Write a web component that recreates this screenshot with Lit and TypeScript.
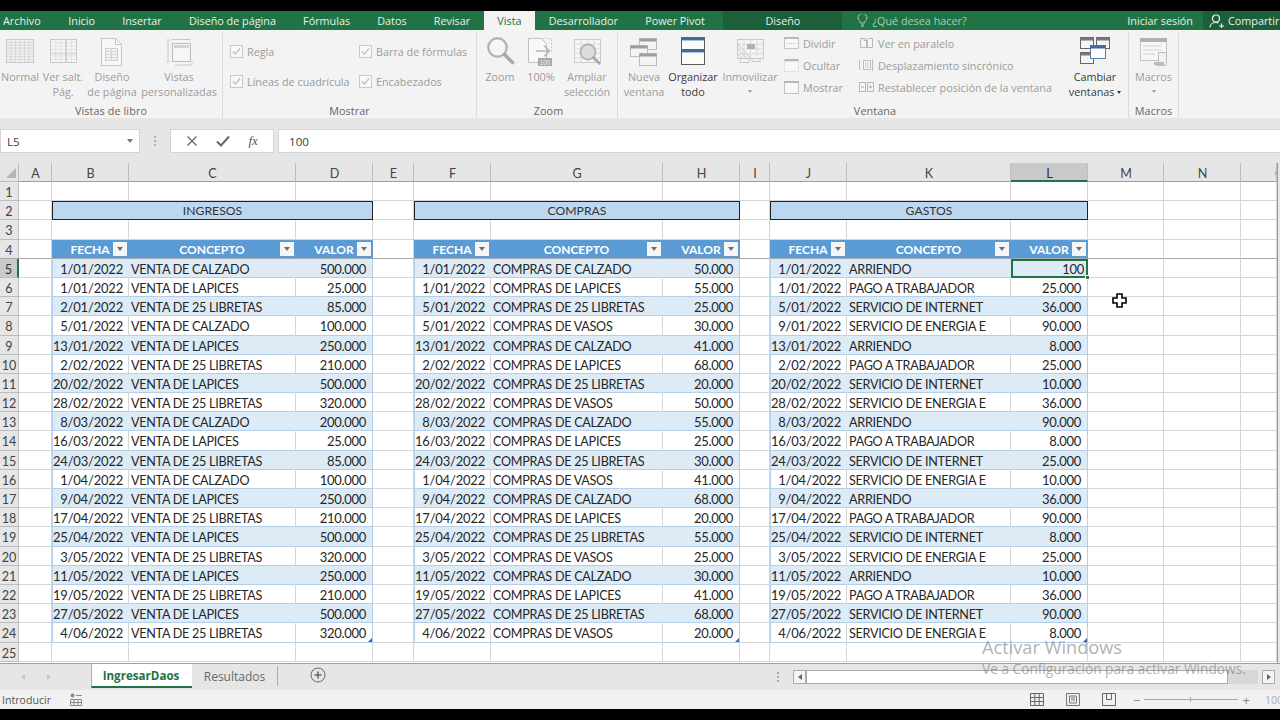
import {LitElement, css, html, svg} from 'lit';
import {customElement} from 'lit/decorators.js';

// draws a table of thin lines, used by most of the ribbon icons
function lines(x: number, y: number, w: number, h: number, cols: number, rows: number, color = '#d2d2d2') {
  const out = [];
  for (let i = 1; i < cols; i++) {
    const px = x + (w * i) / cols;
    out.push(svg`<line x1=${px} y1=${y} x2=${px} y2=${y + h} stroke=${color} stroke-width="0.8"></line>`);
  }
  for (let i = 1; i < rows; i++) {
    const py = y + (h * i) / rows;
    out.push(svg`<line x1=${x} y1=${py} x2=${x + w} y2=${py} stroke=${color} stroke-width="0.8"></line>`);
  }
  return out;
}

const big = (body: unknown) =>
  html`<svg class="icon" width="32" height="32" viewBox="0 0 32 32" fill="none">${body}</svg>`;

const icons: Record<string, unknown> = {
  normal: big(svg`<rect x="2.5" y="4.5" width="27" height="23" fill="#f4f0f0" stroke="#c8c8c8"></rect>${lines(2.5, 4.5, 27, 23, 6, 8)}`),
  pagebreak: big(svg`<rect x="3.5" y="4.5" width="26" height="23" fill="#f6f6f6" stroke="#c8c8c8"></rect>${lines(3.5, 4.5, 26, 23, 5, 7, '#dcdcdc')}
    <line x1="19" y1="4.5" x2="19" y2="27.5" stroke="#bdbdbd"></line><line x1="3.5" y1="19" x2="29.5" y2="19" stroke="#c4c4c4" stroke-dasharray="2 1"></line>`),
  pagelayout: big(svg`<path d="M5.5 3.5h14l6 6v21h-20z" fill="#f8f8f8" stroke="#c6c6c6"></path><path d="M19.5 3.5v6h6" stroke="#c6c6c6"></path>
    <rect x="9.5" y="13.5" width="12" height="12" fill="#f1f1f1" stroke="#cfcfcf"></rect>${lines(9.5, 13.5, 12, 12, 2, 4, '#cfcfcf')}`),
  custom: big(svg`<rect x="9.5" y="8.5" width="18" height="18" fill="#f6f6f6" stroke="#bcbcbc"></rect><rect x="11" y="10" width="15" height="3" fill="#d8d0d0"></rect>
    <path d="M5 5v22M3.5 5h3M3.5 27h3M9 4.5h18M9 3.5v2M27 3.5v2M12 30h17v-3" stroke="#c8c8c8"></path>`),
  zoom: big(svg`<circle cx="13.5" cy="12.5" r="9.2" fill="#f6f6f6" stroke="#b4b4b4" stroke-width="2.4"></circle><path d="M20.5 19.5l8 8" stroke="#aaa" stroke-width="3.6" stroke-linecap="round"></path>`),
  hundred: big(svg`<path d="M3.5 3.5h13l5 5v19h-18z" fill="#f8f8f8" stroke="#c0c0c0"></path><path d="M16.5 3.5h10v15" stroke="#c8c8c8" stroke-dasharray="2 1.5"></path>
    <path d="M11 16h13M19 10.5l5.5 5.5-5.5 5.5" stroke="#b4b4b4" stroke-width="1.4"></path>
    <rect x="13" y="23" width="14" height="8" fill="#a8a8a8"></rect><text x="20" y="29.6" text-anchor="middle" font-size="6.4" font-family="Liberation Sans" fill="#f2f2f2">100</text>`),
  selection: big(svg`<rect x="3.5" y="4.5" width="26" height="23" fill="#f6f6f6" stroke="#cbcbcb"></rect>${lines(3.5, 4.5, 26, 23, 4, 5, '#d6d6d6')}
    <circle cx="17" cy="17" r="7.5" fill="#e0dcdc" stroke="#b4b4b4" stroke-width="1.8"></circle><path d="M22.5 22.5l6 6" stroke="#aaa" stroke-width="2.6" stroke-linecap="round"></path>`),
  newwin: big(svg`<rect x="11.5" y="3.5" width="17" height="11" fill="#f4f4f4" stroke="#bdbdbd"></rect><rect x="11.5" y="3.5" width="17" height="3" fill="#9d9d9d"></rect>
    <rect x="2.5" y="10.5" width="17" height="11" fill="#f4f4f4" stroke="#bdbdbd"></rect><rect x="2.5" y="10.5" width="17" height="3" fill="#9d9d9d"></rect>
    <rect x="11.5" y="18.5" width="17" height="12" fill="#f4f4f4" stroke="#bdbdbd"></rect><rect x="11.5" y="18.5" width="17" height="3" fill="#9d9d9d"></rect>`),
  arrange: big(svg`<rect x="4.5" y="2.5" width="23" height="27" fill="#fbfbfb" stroke="#5a5a5a"></rect><rect x="4" y="2" width="24" height="3.4" fill="#3f6a9f"></rect><rect x="4" y="14" width="24" height="3.4" fill="#3f6a9f"></rect>`),
  freeze: big(svg`<rect x="3.5" y="4.5" width="26" height="19" fill="#f4f4f4" stroke="#c8c8c8"></rect>${lines(3.5, 4.5, 26, 19, 4, 4, '#d4d4d4')}
    <rect x="13" y="9" width="8" height="5" fill="#b0b0b0"></rect><path d="M3.5 14l9 9M3.5 9l13 14M3.5 19l5 4M6 23.5v4h9v-4M18 23.5v3h8v-3" stroke="#c8c8c8"></path>`),
  switchwin: big(svg`<rect x="1.5" y="2.5" width="13" height="11" fill="#f5f5f5" stroke="#666"></rect><rect x="1.5" y="2.5" width="13" height="3" fill="#777"></rect>
    <rect x="17.5" y="2.5" width="13" height="11" fill="#f5f5f5" stroke="#666"></rect><rect x="17.5" y="2.5" width="13" height="3" fill="#777"></rect>
    <rect x="1.5" y="17.5" width="13" height="11" fill="#f5f5f5" stroke="#666"></rect><rect x="1.5" y="17.5" width="13" height="3" fill="#777"></rect>
    <rect x="11.5" y="10.5" width="15" height="13" fill="#fbfbfb" stroke="#5d7ea6"></rect><rect x="11.5" y="10.5" width="15" height="3" fill="#3f6a9f"></rect>`),
  macros: big(svg`<rect x="2.5" y="3.5" width="26" height="22" fill="#f6f6f6" stroke="#c6c6c6"></rect><rect x="2" y="3" width="27" height="4" fill="#b0b0b0"></rect>
    <path d="M5 11h18M5 15h18M5 19h12" stroke="#d2d2d2"></path><path d="M20.5 17.5h8v11a2 2 0 0 1-2 2h-8a2 2 0 0 0 2-2z" fill="#f2f2f2" stroke="#bcbcbc"></path><rect x="16" y="27" width="10" height="3" fill="#bcbcbc"></rect>`),
};

const small = (body: unknown) =>
  html`<svg class="mini" width="15" height="14" viewBox="0 0 15 14" fill="none">${body}</svg>`;

const miniIcons: Record<string, unknown> = {
  split: small(svg`<rect x="0.5" y="1.5" width="14" height="11" fill="#f8f8f8" stroke="#c4c4c4"></rect><rect x="0.5" y="1" width="14" height="2" fill="#b8b8b8"></rect><line x1="3" y1="7.5" x2="12" y2="7.5" stroke="#b8b8b8" stroke-dasharray="1 1"></line>`),
  hide: small(svg`<rect x="0.5" y="1" width="14" height="2" fill="#b4b4b4"></rect><rect x="0.5" y="3.5" width="14" height="10" fill="#f8f8f8" stroke="#d0d0d0" stroke-dasharray="1 1"></rect>`),
  show: small(svg`<rect x="0.5" y="1.5" width="14" height="12" fill="#f8f8f8" stroke="#c4c4c4"></rect><rect x="0.5" y="1" width="14" height="2" fill="#b4b4b4"></rect>`),
  side: small(svg`<path d="M1.5 2.5h5l1 1v8h-6zM8.5 3.5l1-1h4v9h-5z" fill="#f6f6f6" stroke="#b8b8b8"></path><path d="M5 2.5v2h2" stroke="#b8b8b8"></path>`),
  sync: small(svg`<path d="M1.5 2.5h-1v9h1M4.5 2.5h7v9h-7zM13.5 1v12" stroke="#bcbcbc"></path><path d="M6 5h4M6 7h4M6 9h4" stroke="#d0d0d0"></path>`),
  reset: small(svg`<rect x="0.5" y="2.5" width="6" height="9" fill="#f6f6f6" stroke="#b8b8b8"></rect><rect x="8.5" y="2.5" width="6" height="9" fill="#f6f6f6" stroke="#b8b8b8"></rect><path d="M2 7h3M10 7h3M11.5 5.5v3" stroke="#a8a8a8"></path>`),
};

@customElement('excel-ribbon')
export class ExcelRibbon extends LitElement {
  static styles = css`
    :host {
      display: flex;
      height: 88px;
      background: #f3f3f3;
      font-family: "Open Sans", "Liberation Sans", sans-serif;
      font-size: 10.8px;
      color: #9b9b9b;
      flex: none;
    }
    .group {
      display: flex;
      flex-direction: column;
      box-sizing: border-box;
      border-right: 1px solid #dadada;
      margin-top: 3px;
      height: 85px;
    }
    .body {
      flex: 1;
      display: flex;
      margin-top: 2px;
    }
    .label {
      height: 15px;
      line-height: 15px;
      text-align: center;
      color: #666;
      letter-spacing: 0.1px;
    }
    .btn {
      display: flex;
      flex-direction: column;
      align-items: center;
      flex: none;
      line-height: 15px;
      text-align: center;
      white-space: pre;
    }
    .btn.on { color: #3a3a3a; }
    .icon { display: block; margin-bottom: 2px; }
    .caret {
      display: inline-block;
      width: 0;
      height: 0;
      border: 2.5px solid transparent;
      border-top: 3px solid currentColor;
      border-bottom: 0;
      vertical-align: 2px;
    }
    .checks {
      display: grid;
      grid-template-columns: 129px 1fr;
      grid-auto-rows: 30px;
      padding: 6px 0 0 7px;
      width: 100%;
    }
    .check {
      display: flex;
      align-items: center;
      gap: 4px;
      height: 20px;
    }
    .box {
      width: 11px;
      height: 11px;
      border: 1px solid #c9c9c9;
      background: #f8f8f8;
      display: flex;
    }
    .list {
      display: flex;
      flex-direction: column;
      flex: none;
      padding-left: 4px;
      margin-top: -3px;
      box-sizing: border-box;
    }
    .row {
      display: flex;
      align-items: center;
      gap: 4px;
      height: 22px;
      white-space: nowrap;
    }
  `;

  private button(icon: string, text: string, width: number, on = false) {
    return html`<div class="btn ${on ? 'on' : ''}" style="width:${width}px">${icons[icon]}<span>${text}</span></div>`;
  }

  private check(text: string) {
    return html`<div class="check"><span class="box"><svg width="11" height="11" viewBox="0 0 11 11" fill="none"><path d="M2 5.5l2.4 2.6L9 2.5" stroke="#bdbdbd" stroke-width="1.2"></path></svg></span>${text}</div>`;
  }

  private item(icon: string, text: string) {
    return html`<div class="row">${miniIcons[icon]}<span>${text}</span></div>`;
  }

  render() {
    return html`
      <div class="group" style="width:223px">
        <div class="body">
          ${this.button('normal', 'Normal', 40)}
          ${this.button('pagebreak', 'Ver salt.\nPág.', 46)}
          ${this.button('pagelayout', 'Diseño\nde página', 52)}
          ${this.button('custom', 'Vistas\npersonalizadas', 82)}
        </div>
        <div class="label">Vistas de libro</div>
      </div>
      <div class="group" style="width:254px">
        <div class="body">
          <div class="checks">
            ${this.check('Regla')}${this.check('Barra de fórmulas')}
            ${this.check('Líneas de cuadrícula')}${this.check('Encabezados')}
          </div>
        </div>
        <div class="label">Mostrar</div>
      </div>
      <div class="group" style="width:141px;padding-left:3px">
        <div class="body">
          ${this.button('zoom', 'Zoom', 40)}
          ${this.button('hundred', '100%', 42)}
          ${this.button('selection', 'Ampliar\nselección', 50)}
        </div>
        <div class="label">Zoom</div>
      </div>
      <div class="group" style="width:511px;padding-left:4px">
        <div class="body">
          ${this.button('newwin', 'Nueva\nventana', 44)}
          ${this.button('arrange', 'Organizar\ntodo', 54, true)}
          <div class="btn" style="width:60px">${icons.freeze}<span>Inmovilizar</span><span class="caret" style="margin-top:6px"></span></div>
          <div class="list" style="width:75px">
            ${this.item('split', 'Dividir')}${this.item('hide', 'Ocultar')}${this.item('show', 'Mostrar')}
          </div>
          <div class="list" style="width:207px">
            ${this.item('side', 'Ver en paralelo')}${this.item('sync', 'Desplazamiento sincrónico')}${this.item('reset', 'Restablecer posición de la ventana')}
          </div>
          <div class="btn on" style="width:66px">${icons.switchwin}<span>Cambiar</span><span>ventanas <span class="caret"></span></span></div>
        </div>
        <div class="label">Ventana</div>
      </div>
      <div class="group" style="width:50px">
        <div class="body">
          <div class="btn" style="width:49px">${icons.macros}<span>Macros</span><span class="caret" style="margin-top:6px"></span></div>
        </div>
        <div class="label">Macros</div>
      </div>
    `;
  }
}

type Row = [string, string, string];

const dates = ['1/01/2022', '1/01/2022', '5/01/2022', '5/01/2022', '13/01/2022', '2/02/2022', '20/02/2022', '28/02/2022', '8/03/2022', '16/03/2022', '24/03/2022', '1/04/2022', '9/04/2022', '17/04/2022', '25/04/2022', '3/05/2022', '11/05/2022', '19/05/2022', '27/05/2022', '4/06/2022'];

const zip = (d: string[], names: string[], vals: string[]): Row[] => d.map((x, i) => [x, names[i], vals[i]]);

const ingresos = zip(
  dates.map((d, i) => (i === 2 ? '2/01/2022' : d)),
  ['VENTA DE CALZADO', 'VENTA DE LAPICES', 'VENTA DE 25 LIBRETAS', 'VENTA DE CALZADO', 'VENTA DE LAPICES', 'VENTA DE 25 LIBRETAS', 'VENTA DE LAPICES', 'VENTA DE 25 LIBRETAS', 'VENTA DE CALZADO', 'VENTA DE LAPICES', 'VENTA DE 25 LIBRETAS', 'VENTA DE CALZADO', 'VENTA DE LAPICES', 'VENTA DE 25 LIBRETAS', 'VENTA DE LAPICES', 'VENTA DE 25 LIBRETAS', 'VENTA DE LAPICES', 'VENTA DE 25 LIBRETAS', 'VENTA DE LAPICES', 'VENTA DE 25 LIBRETAS'],
  ['500.000', '25.000', '85.000', '100.000', '250.000', '210.000', '500.000', '320.000', '200.000', '25.000', '85.000', '100.000', '250.000', '210.000', '500.000', '320.000', '250.000', '210.000', '500.000', '320.000'],
);

const compras = zip(
  dates,
  ['CALZADO', 'LAPICES', '25 LIBRETAS', 'VASOS', 'CALZADO', 'LAPICES', '25 LIBRETAS', 'VASOS', 'CALZADO', 'LAPICES', '25 LIBRETAS', 'VASOS', 'CALZADO', 'LAPICES', '25 LIBRETAS', 'VASOS', 'CALZADO', 'LAPICES', '25 LIBRETAS', 'VASOS'].map((n) => `COMPRAS DE ${n}`),
  ['50.000', '55.000', '25.000', '30.000', '41.000', '68.000', '20.000', '50.000', '55.000', '25.000', '30.000', '41.000', '68.000', '20.000', '55.000', '25.000', '30.000', '41.000', '68.000', '20.000'],
);

const gastoNames = ['ARRIENDO', 'PAGO A TRABAJADOR', 'SERVICIO DE INTERNET', 'SERVICIO DE ENERGIA E'];
const gastos = zip(
  dates.map((d, i) => (i === 3 ? '9/01/2022' : d)),
  dates.map((_, i) => gastoNames[i % 4]),
  ['100', '25.000', '36.000', '90.000', '8.000', '25.000', '10.000', '36.000', '90.000', '8.000', '25.000', '10.000', '36.000', '90.000', '8.000', '25.000', '10.000', '36.000', '90.000', '8.000'],
);

const tables = [
  {col: 2, title: 'INGRESOS', rows: ingresos},
  {col: 6, title: 'COMPRAS', rows: compras},
  {col: 10, title: 'GASTOS', rows: gastos},
];

const COLS = 'ABCDEFGHIJKLMNO'.split('');

@customElement('excel-grid')
export class ExcelGrid extends LitElement {
  static styles = css`
    :host {
      display: block;
      flex: none;
      height: 500px;
      background: #e6e6e6;
      font-family: Lato, "Liberation Sans", sans-serif;
      font-size: 13px;
      color: #262626;
      position: relative;
      overflow: hidden;
    }
    .sheet {
      display: grid;
      width: 1277px;
      grid-template-columns: 19px 33px 77px 167px 77px 41px 77px 172px 77px 30px 77px 164px 77px 76px 77px 36px;
      grid-template-rows: 19px repeat(25, 19.2px);
      height: 500px;
      background: #fff;
      border-right: 1px solid #9a9a9a;
      overflow: hidden;
    }
    .c {
      box-sizing: border-box;
      border-right: 1px solid #d6d6d6;
      border-bottom: 1px solid #d6d6d6;
      line-height: 20px;
      white-space: nowrap;
      overflow: hidden;
      position: relative;
      min-width: 0;
    }
    .head {
      background: #e6e6e6;
      text-align: center;
      color: #444;
      border-color: #bdbdbd;
      font-size: 12.6px;
      line-height: 21px;
    }
    .head.corner { display: flex; align-items: flex-end; justify-content: flex-end; padding: 0 2px 3px 0; }
    .head.col { border-bottom: 1px solid #9f9f9f; padding-left: 1px; }
    .head.active { background: #c9c9c9; color: #2f2f2f; }
    .head.col.active { border-bottom: 2px solid #217346; }
    .head.row.active { border-right: 2px solid #217346; }
    .head.clip { text-align: left; padding-left: 34px; }
    .freeze { border-bottom-color: #a8a8a8; }
    .title {
      background: #bdd7ee;
      border: 1px solid #222;
      text-align: center;
      font-size: 12.2px;
      color: #333;
      line-height: 18px;
    }
    .th {
      background: #5b9bd5;
      border-color: #5b9bd5;
      border-bottom-color: #a8a8a8;
      color: #fff;
      font-weight: 700;
      font-size: 12px;
      text-align: center;
      overflow: visible;
    }
    .flt {
      position: absolute;
      right: 1px;
      top: 2px;
      width: 14px;
      height: 14px;
      background: #f5f5f5;
      display: flex;
      align-items: center;
      justify-content: center;
    }
    .flt::after {
      content: '';
      border: 3.5px solid transparent;
      border-top: 4px solid #6f6f6f;
      border-bottom: 0;
    }
    .odd { background: #ddebf7; border-right-color: #ddebf7; }
    .td { border-bottom-color: #b4cfea; line-height: 21px; }
    .even { background: #fff; }
    .first { border-left: 1px solid #b4cfea; }
    .last { border-right: 1px solid #b4cfea; }
    .date { text-align: right; padding-right: 5px; letter-spacing: -0.2px; }
    .name { padding-left: 2px; font-size: 12.6px; letter-spacing: -0.27px; }
    .val { text-align: right; padding-right: 6px; letter-spacing: -0.3px; }
    .end::after {
      content: '';
      position: absolute;
      right: 0;
      bottom: 0;
      border-left: 4px solid transparent;
      border-bottom: 4px solid #3f5fa8;
    }
    .sel {
      outline: 2px solid #217346;
      outline-offset: -2px;
      padding-right: 3px;
      overflow: visible;
      z-index: 2;
    }
    .sel::after {
      content: '';
      position: absolute;
      right: -3px;
      bottom: -3px;
      width: 5px;
      height: 5px;
      background: #217346;
      border: 1px solid #fff;
      box-sizing: border-box;
    }
    .tri {
      width: 0;
      height: 0;
      border-left: 10px solid transparent;
      border-bottom: 10px solid #b4b4b4;
    }
    .pointer {
      position: absolute;
      left: 1112px;
      top: 130px;
    }
  `;

  // content of one cell of the sheet, r and c start at 1 like in excel
  private cell(r: number, c: number) {
    for (const t of tables) {
      if (c < t.col || c > t.col + 2) continue;
      const i = c - t.col;
      if (r === 4) {
        const label = ['FECHA', 'CONCEPTO', 'VALOR'][i];
        return html`<div class="c th"><span>${label}</span><span class="flt"></span></div>`;
      }
      if (r >= 5 && r <= 24) {
        const row = t.rows[r - 5];
        const selected = r === 5 && c === 12;
        const cls = [
          'c', 'td',
          r % 2 ? 'odd' : 'even',
          ['date', 'name', 'val'][i],
          i === 0 ? 'first' : '',
          i === 2 ? 'last' : '',
          i === 2 && r === 24 ? 'end' : '',
          selected ? 'sel' : '',
        ].join(' ');
        return html`<div class=${cls}>${row[i]}</div>`;
      }
    }
    return html`<div class="c ${r === 4 ? 'freeze' : ''}"></div>`;
  }

  render() {
    const rows = [];
    for (let r = 1; r <= 25; r++) {
      rows.push(html`<div class="c head row ${r === 5 ? 'active' : ''} ${r === 4 ? 'freeze' : ''}">${r}</div>`);
      for (let c = 1; c <= 15; c++) {
        const t = tables.find((x) => x.col === c);
        if (r === 2 && t) {
          rows.push(html`<div class="c title" style="grid-column:span 3">${t.title}</div>`);
          c += 2;
          continue;
        }
        rows.push(this.cell(r, c));
      }
    }
    return html`
      <div class="sheet">
        <div class="c head corner"><span class="tri"></span></div>
        ${COLS.map((l) => html`<div class="c head col ${l === 'L' ? 'active' : ''} ${l === 'O' ? 'clip' : ''}">${l}</div>`)}
        ${rows}
      </div>
      <svg class="pointer" width="15" height="15" viewBox="0 0 15 15">
        <path d="M5 1h5v4h4v5h-4v4H5v-4H1V5h4z" fill="#fff" stroke="#000" stroke-width="1.6"></path>
      </svg>
    `;
  }
}

@customElement('app-root')
export class AppRoot extends LitElement {
  static styles = css`
    :host {
      display: flex;
      flex-direction: column;
      width: 1280px;
      height: 720px;
      background: #000;
      overflow: hidden;
      position: relative;
      font-family: "Open Sans", "Liberation Sans", sans-serif;
    }
    .black-top { height: 11px; flex: none; }
    .tabs {
      display: flex;
      align-items: stretch;
      height: 19px;
      flex: none;
      background: #217346;
      color: #e8f1ec;
      font-size: 10.8px;
      line-height: 19px;
      white-space: nowrap;
    }
    .tab { padding: 0 13.6px; }
    .tab.file { padding: 0 14px 0 3px; }
    .tab.on { background: #f3f3f3; color: #217346; }
    .tab.context {
      background: #1c5f3a;
      width: 119px;
      box-sizing: border-box;
      text-align: center;
      padding: 0;
      margin-left: 5px;
    }
    .tell {
      display: flex;
      align-items: center;
      gap: 4px;
      margin-left: 15px;
      color: #a9cbb8;
      flex: 1;
    }
    .login { margin-right: 10px; }
    .share {
      display: flex;
      align-items: center;
      gap: 3px;
      background: #1c5f3a;
      width: 77px;
      padding-left: 6px;
      box-sizing: border-box;
      overflow: hidden;
    }
    .band { height: 11px; flex: none; background: #e6e6e6; }
    .formula {
      display: flex;
      align-items: stretch;
      height: 34px;
      padding-bottom: 10px;
      box-sizing: border-box;
      background: #e6e6e6;
      flex: none;
      font-size: 11.6px;
      color: #404040;
    }
    .namebox {
      width: 140px;
      background: #fff;
      border: 1px solid #d4d4d4;
      box-sizing: border-box;
      display: flex;
      align-items: center;
      justify-content: space-between;
      padding: 0 6px;
    }
    .down {
      border: 3.5px solid transparent;
      border-top: 4px solid #777;
      border-bottom: 0;
    }
    .dots {
      width: 30px;
      display: flex;
      flex-direction: column;
      align-items: center;
      justify-content: center;
      gap: 2px;
    }
    .dots i { width: 2px; height: 2px; background: #b0b0b0; display: block; }
    .fxbox {
      width: 104px;
      background: #fff;
      border: 1px solid #d4d4d4;
      box-sizing: border-box;
      display: flex;
      align-items: center;
      justify-content: space-around;
      padding: 0 6px;
      margin-right: 4px;
    }
    .fx {
      font-family: "Liberation Serif", serif;
      font-style: italic;
      font-size: 13px;
      color: #555;
    }
    .input {
      flex: 1;
      background: #fff;
      border: 1px solid #d4d4d4;
      border-right: 0;
      display: flex;
      align-items: center;
      padding-left: 10px;
    }
    .sheets {
      display: flex;
      align-items: stretch;
      height: 27px;
      flex: none;
      background: #e6e6e6;
      border-top: 1px solid #a0a0a0;
      box-sizing: border-box;
      font-size: 12px;
      color: #666;
    }
    .nav {
      width: 91px;
      display: flex;
      align-items: center;
      gap: 22px;
      padding-left: 21px;
      box-sizing: border-box;
    }
    .nav i { border: 3px solid transparent; }
    .nav i.l { border-right: 4px solid #c6c6c6; border-left: 0; }
    .nav i.r { border-left: 4px solid #c6c6c6; border-right: 0; }
    .sheet-tab {
      display: flex;
      align-items: center;
      justify-content: center;
      box-sizing: border-box;
      height: 24px;
    }
    .sheet-tab.on {
      width: 101px;
      background: #fff;
      color: #217346;
      font-weight: 700;
      font-size: 11.6px;
      border-left: 1px solid #ababab;
      border-bottom: 2px solid #217346;
      padding-right: 2px;
    }
    .sheet-tab.off {
      width: 86px;
      border-right: 1px solid #ababab;
      margin: 2px 0 3px;
      height: 20px;
    }
    .add { margin: 3px 0 0 32px; }
    .dots3 {
      margin: 0 8px 0 444px;
      width: 15px;
      display: flex;
      flex-direction: column;
      align-items: center;
      justify-content: center;
      gap: 2px;
    }
    .dots3 i { width: 2px; height: 2px; background: #aaa; display: block; }
    .scroll {
      display: flex;
      align-items: center;
      height: 14px;
      margin-top: 6px;
    }
    .arrow {
      width: 13px;
      height: 14px;
      box-sizing: border-box;
      background: #f4f4f4;
      border: 1px solid #ababab;
      display: flex;
      align-items: center;
      justify-content: center;
    }
    .arrow i { border: 3px solid transparent; }
    .arrow i.l { border-right: 4px solid #666; border-left: 0; }
    .arrow i.r { border-left: 4px solid #666; border-right: 0; }
    .track {
      width: 452px;
      height: 14px;
      background: #d8d8d8;
      margin-right: 4px;
    }
    .thumb {
      width: 422px;
      height: 14px;
      background: #fff;
      border: 1px solid #ababab;
      box-sizing: border-box;
    }
    .status {
      display: flex;
      align-items: center;
      height: 19px;
      flex: none;
      background: #f1f1f1;
      font-size: 10.6px;
      color: #555;
      padding-left: 2px;
      overflow: hidden;
    }
    .status .rec { margin-left: 18px; }
    .views {
      display: flex;
      align-items: center;
      margin-left: auto;
      gap: 22px;
      margin-right: 14px;
    }
    .slider {
      display: flex;
      align-items: center;
      color: #888;
      gap: 4px;
      font-size: 13px;
      width: 118px;
      margin-left: -5px;
    }
    .slider .rail {
      width: 94px;
      height: 1px;
      background: #a8a8a8;
      position: relative;
    }
    .slider .rail::after {
      content: '';
      position: absolute;
      left: 46px;
      top: -2px;
      width: 1px;
      height: 5px;
      background: #a8a8a8;
    }
    .pct {
      width: 15px;
      overflow: hidden;
      color: #aaa;
      white-space: nowrap;
    }
    .bottom { flex: 1; }
    .watermark {
      position: absolute;
      left: 982px;
      top: 636px;
      color: rgba(110, 110, 110, 0.55);
      pointer-events: none;
      white-space: nowrap;
    }
    .watermark .a { font-size: 18.2px; line-height: 22px; }
    .watermark .b { font-size: 13.7px; line-height: 22px; }
  `;

  render() {
    const tabs = ['Inicio', 'Insertar', 'Diseño de página', 'Fórmulas', 'Datos', 'Revisar'];
    return html`
      <div class="black-top"></div>
      <div class="tabs">
        <div class="tab file">Archivo</div>
        ${tabs.map((t) => html`<div class="tab">${t}</div>`)}
        <div class="tab on">Vista</div>
        <div class="tab">Desarrollador</div>
        <div class="tab">Power Pivot</div>
        <div class="tab context">Diseño</div>
        <div class="tell">
          <svg width="11" height="13" viewBox="0 0 11 13" fill="none" stroke="#a9cbb8">
            <path d="M3.5 9c0-2-2.5-3-2.5-5a4.5 4.5 0 0 1 9 0c0 2-2.5 3-2.5 5zM4 11h3M4.5 12.5h2"></path>
          </svg>
          <span>¿Qué desea hacer?</span>
        </div>
        <div class="login">Iniciar sesión</div>
        <div class="share">
          <svg width="16" height="14" viewBox="0 0 16 14" fill="none" stroke="#e8f1ec" stroke-width="1.2">
            <circle cx="7" cy="4.5" r="3.5"></circle>
            <path d="M1 13.5c0-3 2.5-5 6-5 1 0 2 .2 2.5.5M10 12h5M12.5 9.5v5"></path>
          </svg>
          <span>Compartir</span>
        </div>
      </div>
      <excel-ribbon></excel-ribbon>
      <div class="band"></div>
      <div class="formula">
        <div class="namebox"><span>L5</span><span class="down"></span></div>
        <div class="dots"><i></i><i></i><i></i></div>
        <div class="fxbox">
          <svg width="12" height="12" viewBox="0 0 12 12" fill="none" stroke="#666" stroke-width="1.3"><path d="M1.5 1.5l9 9M10.5 1.5l-9 9"></path></svg>
          <svg width="14" height="12" viewBox="0 0 14 12" fill="none" stroke="#666" stroke-width="2"><path d="M1 6.5l4 4 8-9"></path></svg>
          <span class="fx">fx</span>
        </div>
        <div class="input">100</div>
      </div>
      <excel-grid></excel-grid>
      <div class="sheets">
        <div class="nav"><i class="l"></i><i class="r"></i></div>
        <div class="sheet-tab on">IngresarDaos</div>
        <div class="sheet-tab off">Resultados</div>
        <svg class="add" width="16" height="16" viewBox="0 0 16 16" fill="none" stroke="#666">
          <circle cx="8" cy="8" r="7"></circle><path d="M4.5 8h7M8 4.5v7" stroke-width="1.5"></path>
        </svg>
        <div class="dots3"><i></i><i></i><i></i></div>
        <div class="scroll">
          <div class="arrow"><i class="l"></i></div>
          <div class="track"><div class="thumb"></div></div>
          <div class="arrow"><i class="r"></i></div>
        </div>
      </div>
      <div class="status">
        <span>Introducir</span>
        <svg class="rec" width="14" height="14" viewBox="0 0 14 14" fill="none" stroke="#8a8a8a">
          <circle cx="3.5" cy="2.5" r="2" fill="#8a8a8a" stroke="none"></circle>
          <path d="M7 2.5h6M1.5 6.5h11v6h-11zM1.5 9.5h11M5 6.5v6M9 6.5v6"></path>
        </svg>
        <div class="views">
          <svg width="14" height="13" viewBox="0 0 14 13" fill="none" stroke="#666"><path d="M.5.5h13v12H.5zM.5 4.5h13M.5 8.5h13M4.8.5v12M9.2.5v12"></path></svg>
          <svg width="14" height="13" viewBox="0 0 14 13" fill="none" stroke="#777"><path d="M.5.5h13v12H.5zM3.5 3h7v7h-7zM5 5h4M5 7h4"></path></svg>
          <svg width="14" height="13" viewBox="0 0 14 13" fill="none" stroke="#666"><path d="M.5.5h13v12H.5zM4.5.5v6h5v-6"></path></svg>
          <div class="slider">
            <span>−</span><span class="rail"></span><span>+</span>
          </div>
        </div>
        <span class="pct">100 %</span>
      </div>
      <div class="bottom"></div>
      <div class="watermark">
        <div class="a">Activar Windows</div>
        <div class="b">Ve a Configuración para activar Windows.</div>
      </div>
    `;
  }
}
